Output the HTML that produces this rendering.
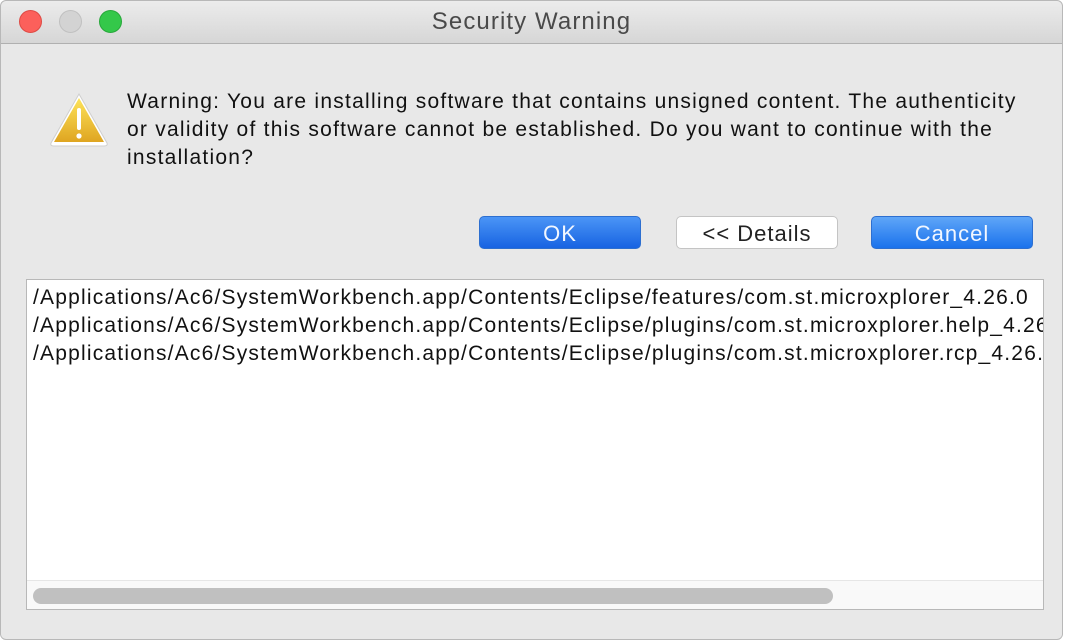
<!DOCTYPE html>
<html><head><style>
body{margin:0;width:1066px;height:633px;background:#fff;overflow:hidden;font-family:"Liberation Sans",sans-serif;}
.win{position:absolute;left:0;top:0;width:1063px;height:640px;background:#e8e8e8;border:1px solid #b8b8b8;border-radius:6px;box-sizing:border-box;}
.title{position:absolute;left:0;top:0;width:100%;height:42px;background:linear-gradient(#ececec,#d6d6d6);border-bottom:1px solid #b0b0b0;border-radius:6px 6px 0 0;text-align:center;line-height:42px;font-size:24px;letter-spacing:1.1px;color:#4a4a4a;}
.dot{position:absolute;top:9px;width:23px;height:23px;border-radius:50%;box-sizing:border-box;}
.msg{position:absolute;left:126px;top:87px;font-size:21px;letter-spacing:1.25px;line-height:28px;color:#111;white-space:nowrap;}
.btn{position:absolute;top:215px;height:33px;width:162px;border-radius:5px;box-sizing:border-box;text-align:center;line-height:33px;font-size:22px;letter-spacing:1px;}
.blue{background:linear-gradient(#5fa6f8,#1a72ec);color:#f2f7ff;border:1px solid #2d6fd0;}
.list{position:absolute;left:25px;top:278px;width:1018px;height:331px;background:#fff;border:1px solid #b8b8b8;box-sizing:border-box;overflow:hidden;}
.list div{white-space:nowrap;font-size:21px;letter-spacing:1.2px;line-height:28px;color:#111;padding-left:6px;}
</style></head><body>
<div class="win">
<div class="title">Security Warning
<div class="dot" style="left:18px;background:#fc605b;border:1px solid #de4a44"></div>
<div class="dot" style="left:58px;background:#d3d3d3;border:1px solid #c0c0c0"></div>
<div class="dot" style="left:98px;background:#34c84a;border:1px solid #27a83a"></div>
</div>
<svg style="position:absolute;left:47px;top:90px" width="62" height="56" viewBox="0 0 62 56">
<defs><linearGradient id="g" x1="0" y1="0" x2="0" y2="1"><stop offset="0" stop-color="#fde35a"/><stop offset="1" stop-color="#dfa521"/></linearGradient></defs>
<path d="M31 3 L59 52 Q60 55 56 55 L6 55 Q2 55 3 52 Z" fill="#fff" stroke="#cfcfcf"/>
<path d="M31 7 L56 51 L6 51 Z" fill="url(#g)" stroke-linejoin="round"/>
<rect x="29" y="17" width="4" height="22" rx="2" fill="#fff"/>
<circle cx="31" cy="45" r="2.6" fill="#fff"/>
</svg>
<div class="msg">Warning: You are installing software that contains unsigned content. The authenticity<br>or validity of this software cannot be established. Do you want to continue with the<br>installation?</div>
<div class="btn blue" style="left:478px;background:linear-gradient(#4b95f6,#1763e2)">OK</div>
<div class="btn" style="left:675px;background:#fff;border:1px solid #c4c4c4;color:#222">&lt;&lt; Details</div>
<div class="btn blue" style="left:870px">Cancel</div>
<div class="list">
<div style="margin-top:4px">/Applications/Ac6/SystemWorkbench.app/Contents/Eclipse/features/com.st.microxplorer_4.26.0</div>
<div>/Applications/Ac6/SystemWorkbench.app/Contents/Eclipse/plugins/com.st.microxplorer.help_4.26.0</div>
<div>/Applications/Ac6/SystemWorkbench.app/Contents/Eclipse/plugins/com.st.microxplorer.rcp_4.26.0</div>
<div style="position:absolute;left:0;top:300px;width:100%;height:30px;background:#f9f9f9;border-top:1px solid #e6e6e6;padding:0"></div>
<div style="position:absolute;left:6px;top:308px;width:800px;height:16px;border-radius:8px;background:#c0c0c0;padding:0"></div>
</div>
</div>
</body></html>
